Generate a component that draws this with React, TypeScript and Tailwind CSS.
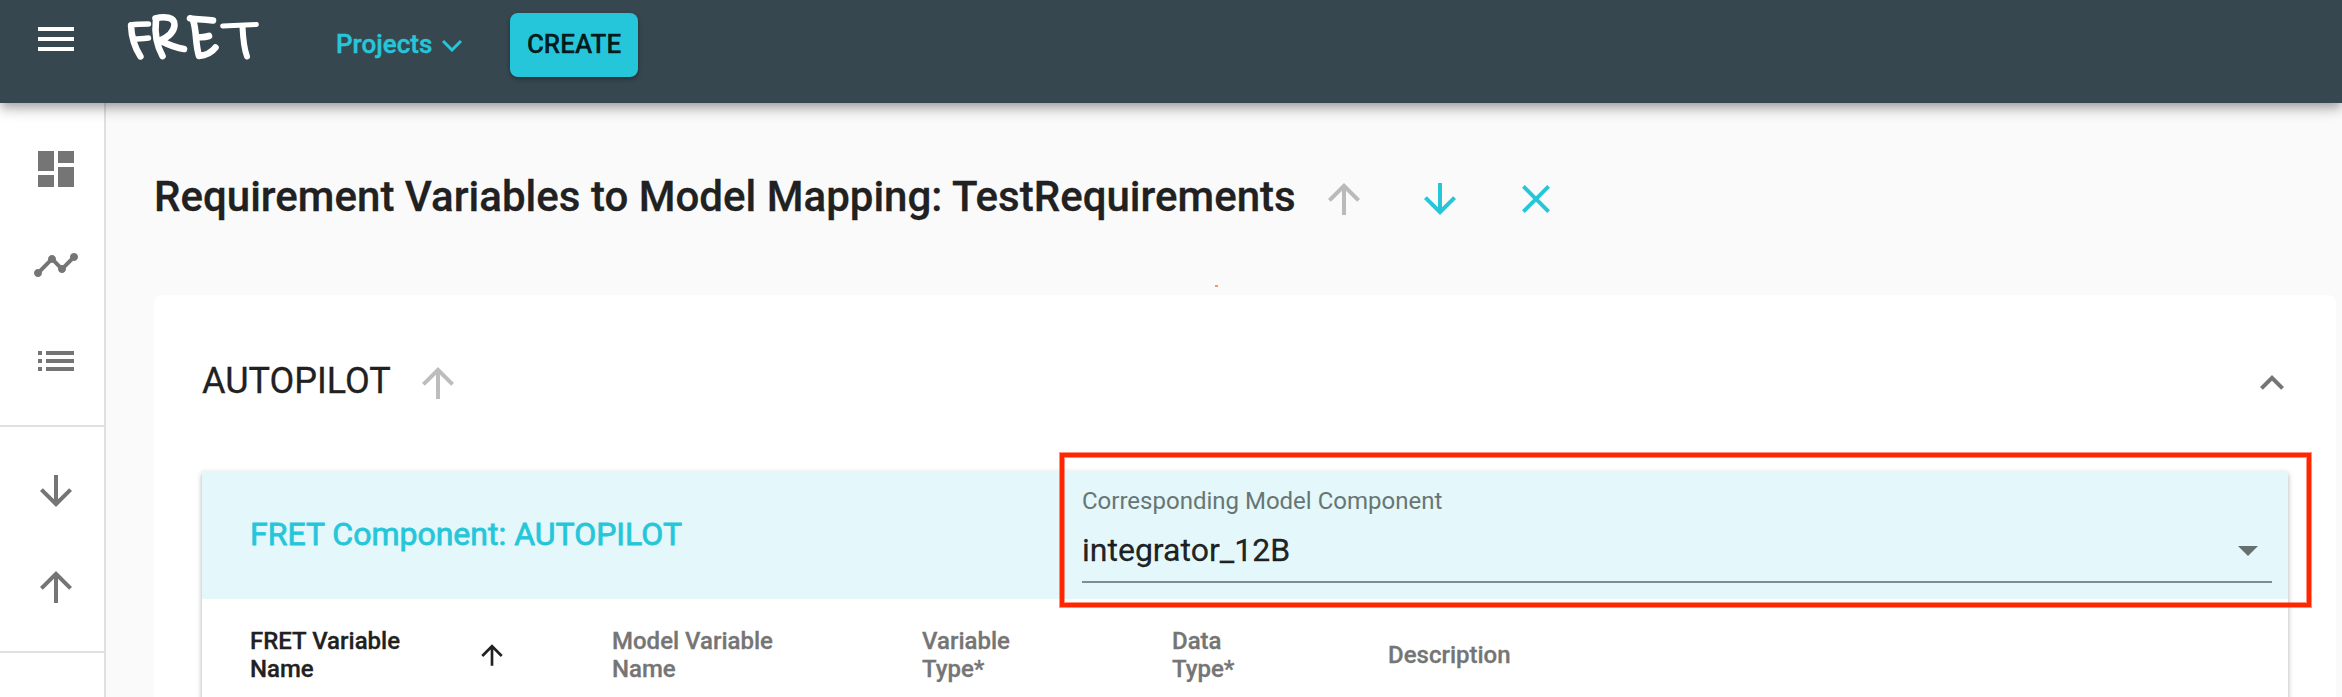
import React from "react";

const PATHS = {
  menu: "M3 18h18v-2H3v2zm0-5h18v-2H3v2zm0-7v2h18V6H3z",
  dashboard: "M3 13h8V3H3v10zm0 8h8v-6H3v6zm10 0h8V11h-8v10zm0-18v6h8V3h-8z",
  timeline:
    "M23 8c0 1.1-.9 2-2 2-.18 0-.35-.02-.51-.07l-3.56 3.55c.05.16.07.34.07.52 0 1.1-.9 2-2 2s-2-.9-2-2c0-.18.02-.36.07-.52l-2.55-2.55c-.16.05-.34.07-.52.07s-.36-.02-.52-.07l-4.55 4.56c.05.16.07.33.07.51 0 1.1-.9 2-2 2s-2-.9-2-2 .9-2 2-2c.18 0 .35.02.51.07l4.56-4.55C8.02 9.36 8 9.18 8 9c0-1.1.9-2 2-2s2 .9 2 2c0 .18-.02.36-.07.52l2.55 2.55c.16-.05.34-.07.52-.07s.36.02.52.07l3.55-3.56C19.02 8.35 19 8.18 19 8c0-1.1.9-2 2-2s2 .9 2 2z",
  list: "M3 13h2v-2H3v2zm0 4h2v-2H3v2zm0-8h2V7H3v2zm4 4h14v-2H7v2zm0 4h14v-2H7v2zM7 7v2h14V7H7z",
  down: "M20 12l-1.41-1.41L13 16.17V4h-2v12.17l-5.58-5.59L4 12l8 8 8-8z",
  up: "M4 12l1.41 1.41L11 7.83V20h2V7.83l5.58 5.59L20 12l-8-8-8 8z",
  close:
    "M19 6.41L17.59 5 12 10.59 6.41 5 5 6.41 10.59 12 5 17.59 6.41 19 12 13.41 17.59 19 19 17.59 13.41 12z",
  expandLess: "M12 8l-6 6 1.41 1.41L12 10.83l4.59 4.58L18 14z",
  dropdown: "M7 10l5 5 5-5z",
};

function Icon({ name, className = "" }: { name: keyof typeof PATHS; className?: string }) {
  return (
    <svg viewBox="0 0 24 24" fill="currentColor" className={`block shrink-0 ${className}`}>
      <path d={PATHS[name]} />
    </svg>
  );
}

function Logo() {
  return (
    <svg
      viewBox="0 0 140 66"
      className="block h-[66px] w-[140px] shrink-0"
      fill="none"
      stroke="#fff"
      strokeWidth="5.8"
      strokeLinecap="round"
      strokeLinejoin="round"
      role="img"
      aria-label="FRET"
    >
      <path d="M11 25.5C11.5 38 15 48 20.5 56.5" strokeWidth="6.4" />
      <path d="M11 25C17 24 23 24 28.5 24M14 39C19 39 24 38.5 28.5 38" strokeWidth="5.4" />
      <path
        d="M36 20C34.5 33 37 46 42.5 56M35.5 18.5C44 16 55 17 54.5 25C54 33 46 38 40 40.5C47 44 56 48 64 49"
        strokeWidth="6.6"
      />
      <path d="M73 20C77 32 75 43 79 56C86 55.5 92 52 95.5 47.5M70 18.3C78 20 86 19 93 20.5M77 37C82 37.5 86 37 89 36" strokeWidth="6.6" />
      <path d="M102.5 26C113 25.5 124 25 136.5 24.5" strokeWidth="4.8" />
      <path d="M122.5 27C123 37 123.5 47 127 56.5" strokeWidth="6" />
    </svg>
  );
}

function Header() {
  return (
    <header className="relative z-10 flex h-[103px] shrink-0 items-start bg-[#37474f] shadow-[0_4px_8px_-2px_rgba(0,0,0,0.2),0_8px_10px_0_rgba(0,0,0,0.14),0_2px_20px_0_rgba(0,0,0,0.12)]">
      <Icon name="menu" className="mt-[15px] ml-8 size-12 text-white" />
      <div className="ml-[40px] w-[216px]">
        <Logo />
      </div>
      <div className="mt-[22px] flex h-11 w-[174px] items-center text-[26px] font-medium text-[#26c6da]">
        <span className="w-[106px] [-webkit-text-stroke:0.4px]">Projects</span>
        <svg
          viewBox="0 0 20 12"
          className="mt-[3px] block h-3 w-5 shrink-0"
          fill="none"
          stroke="currentColor"
          strokeWidth="3"
        >
          <path d="M1 1L10 10L19 1" />
        </svg>
      </div>
      <button className="mt-[13px] h-16 w-32 rounded-lg bg-[#26c6da] text-[26px] font-medium text-black/87 shadow-[0_2px_4px_rgba(0,0,0,0.35)]">
        <span className="relative -top-px [-webkit-text-stroke:0.3px]">CREATE</span>
      </button>
    </header>
  );
}

function Sidebar() {
  return (
    <nav className="flex w-[106px] shrink-0 flex-col border-r-2 border-[#e0e0e0] bg-white text-[#757575]">
      <div className="flex flex-col gap-12 border-b-2 border-[#e0e0e0] pt-[42px] pb-10 pl-8">
        <Icon name="dashboard" className="size-12" />
        <Icon name="timeline" className="size-12" />
        <Icon name="list" className="size-12" />
      </div>
      <div className="flex flex-col gap-12 border-b-2 border-[#e0e0e0] pt-10 pb-10 pl-8">
        <Icon name="down" className="size-12" />
        <Icon name="up" className="size-12" />
      </div>
    </nav>
  );
}

function ComponentPanel() {
  return (
    <div className="relative mx-12 flex flex-1 flex-col bg-white shadow-[0_2px_6px_rgba(0,0,0,0.2),0_4px_4px_rgba(0,0,0,0.14),0_4px_2px_-2px_rgba(0,0,0,0.12)]">
      <div className="flex h-32 shrink-0 bg-[#e4f7fa]">
        <div className="w-[880px] pt-[43px] pl-12 text-[32px] leading-[40px] text-[#26c6da] [-webkit-text-stroke:0.8px]">
          FRET Component: AUTOPILOT
        </div>
        <div className="mr-[16px] flex h-[112px] flex-1 flex-col border-b-2 border-[#7f8f8f]">
          <div className="pt-[16px] text-2xl leading-[28px] text-[#677674]">Corresponding Model Component</div>
          <div className="flex items-center justify-between pt-[11px] text-[32px] leading-[48px] text-black/87">
            <span className="[-webkit-text-stroke:0.3px]">integrator_12B</span>
            <Icon name="dropdown" className="size-12 text-[#66706f]" />
          </div>
        </div>
      </div>
      <div className="flex h-28 items-center pl-12 text-2xl leading-[28px] font-medium text-[#757575] [-webkit-text-stroke:0.3px]">
        <div className="flex w-[362px] items-center text-[#212121]">
          <span className="w-[226px]">
            FRET Variable
            <br />
            Name
          </span>
          <Icon name="up" className="size-8" />
        </div>
        <div className="w-[310px]">
          Model Variable
          <br />
          Name
        </div>
        <div className="w-[250px]">
          Variable
          <br />
          Type*
        </div>
        <div className="w-[216px]">
          Data
          <br />
          Type*
        </div>
        <div>Description</div>
      </div>
      <div className="pointer-events-none absolute -top-[18px] left-[858px] h-[154px] w-[1251px] border-4 border-[#ff2600] shadow-[0_0_0_1px_rgba(255,38,0,0.5),inset_0_0_0_1px_rgba(255,38,0,0.5)]" />
    </div>
  );
}

export default function App() {
  return (
    <div className="flex h-[697px] w-[2342px] flex-col overflow-hidden bg-[#fafafa] font-[Roboto,sans-serif] text-[#212121]">
      <Header />
      <div className="flex min-h-0 flex-1">
        <Sidebar />
        <main className="flex flex-1 flex-col pr-[6px] pl-12">
          <div className="relative flex h-48 shrink-0 items-start pt-[69px]">
            <h1 className="w-[1166px] text-[42px] leading-[49px] font-medium tracking-[0.02px] whitespace-nowrap [-webkit-text-stroke:0.3px]">
              Requirement Variables to Model Mapping: TestRequirements
            </h1>
            <div className="mt-[3px] flex gap-12">
              <Icon name="up" className="size-12 text-[#bababa]" />
              <Icon name="down" className="size-12 text-[#26c6da]" />
              <Icon name="close" className="size-12 text-[#26c6da]" />
            </div>
            <span className="absolute top-[182px] left-[1061px] h-[2px] w-[3px] bg-[#ff8f7d]" />
          </div>
          <section className="flex min-h-0 flex-1 flex-col rounded-t-lg bg-white">
            <div className="flex h-44 shrink-0 items-start pt-[64px] pr-10 pl-12">
              <h2 className="w-[212px] text-[36px] leading-[44px] [-webkit-text-stroke:0.3px]">AUTOPILOT</h2>
              <Icon name="up" className="size-12 text-[#bdbdbd]" />
              <Icon name="expandLess" className="ml-auto size-12 text-[#757575]" />
            </div>
            <ComponentPanel />
          </section>
        </main>
      </div>
    </div>
  );
}
